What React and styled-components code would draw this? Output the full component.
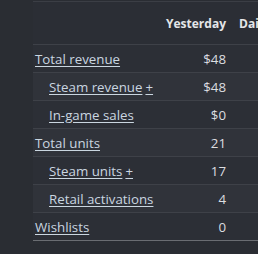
import React from 'react';
import styled, { createGlobalStyle } from 'styled-components';

const GlobalStyle = createGlobalStyle`
  html, body {
    margin: 0;
    padding: 0;
    background: #2a2d33;
    overflow: hidden;
  }
`;

const Page = styled.div`
  width: 258px;
  height: 254px;
  padding-left: 33px;
  padding-top: 1px;
  box-sizing: border-box;
  overflow: hidden;
  font-family: 'Open Sans', 'Liberation Sans', sans-serif;
  font-size: 13.3px;
`;

const Table = styled.table`
  width: 420px;
  table-layout: fixed;
  border-collapse: collapse;
  border-top: 1px solid #3b3e45;
`;

const HeadCell = styled.th`
  height: 42px;
  padding: 0 6px;
  text-align: right;
  font-size: 12px;
  font-weight: 700;
  color: #e4e6e8;
  background: #2b2e35;
  border-bottom: 1px solid #3e4148;
  white-space: nowrap;
  &:first-child {
    text-align: left;
  }
  &:last-child {
    text-align: left;
    padding-left: 7px;
  }
`;

const Row = styled.tr`
  background: ${({ $even }) => ($even ? '#30333a' : '#2c2f36')};
  & > td {
    border-bottom: 1px solid ${({ $last }) => ($last ? '#6a6d72' : '#3e4148')};
  }
`;

const LabelCell = styled.td`
  height: 27px;
  padding: 0 0 0 ${({ $sub }) => ($sub ? '16px' : '2px')};
  white-space: nowrap;
`;

const ValueCell = styled.td`
  height: 27px;
  padding: 0 6px;
  text-align: right;
  color: #dcdee0;
`;

const Link = styled.a`
  color: #cad6e0;
  text-decoration: underline;
  text-underline-offset: 2px;
  cursor: pointer;
`;

const Plus = styled(Link)`
  margin-left: 3px;
`;

const rows = [
  { label: 'Total revenue', value: '$48' },
  { label: 'Steam revenue', value: '$48', sub: true, plus: true },
  { label: 'In-game sales', value: '$0', sub: true },
  { label: 'Total units', value: '21' },
  { label: 'Steam units', value: '17', sub: true, plus: true },
  { label: 'Retail activations', value: '4', sub: true },
  { label: 'Wishlists', value: '0' },
];

export default function App() {
  return (
    <Page>
      <GlobalStyle />
      <Table>
        <colgroup>
          <col style={{ width: 127 }} />
          <col style={{ width: 72 }} />
          <col style={{ width: 221 }} />
        </colgroup>
        <thead>
          <tr>
            <HeadCell />
            <HeadCell>Yesterday</HeadCell>
            <HeadCell>Daily average</HeadCell>
          </tr>
        </thead>
        <tbody>
          {rows.map((r, i) => (
            <Row key={r.label} $even={i % 2 === 1} $last={i === rows.length - 1}>
              <LabelCell $sub={r.sub}>
                <Link>{r.label}</Link>
                {r.plus && <Plus>+</Plus>}
              </LabelCell>
              <ValueCell>{r.value}</ValueCell>
              <ValueCell />
            </Row>
          ))}
        </tbody>
      </Table>
    </Page>
  );
}
